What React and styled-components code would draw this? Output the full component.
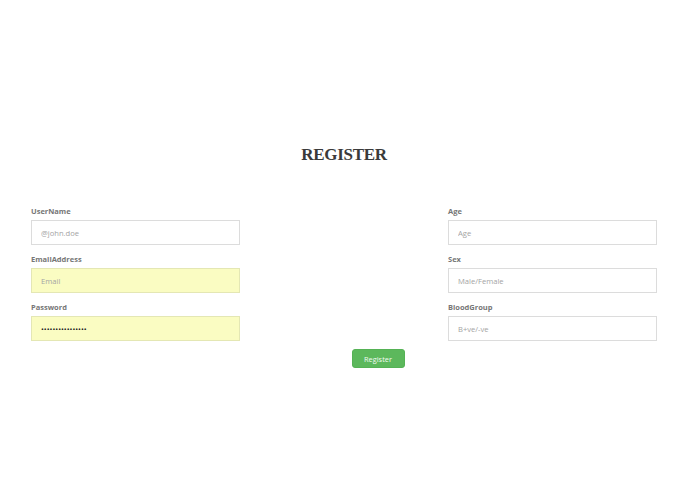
import React from "react";
import styled, { createGlobalStyle } from "styled-components";

const GlobalStyle = createGlobalStyle`
  html, body {
    margin: 0;
    padding: 0;
    background: #fff;
  }
  body {
    font-family: "Open Sans", "Liberation Sans", sans-serif;
  }
`;

const Page = styled.div`
  padding: 144px 38px 0 31px;
`;

const Title = styled.h1`
  margin: 0 0 41px;
  text-align: center;
  font-family: "Liberation Serif", "DejaVu Serif", serif;
  font-weight: 700;
  font-size: 17px;
  line-height: 21px;
  letter-spacing: -0.3px;
  color: #3a3a3a;
`;

const Columns = styled.div`
  display: grid;
  grid-template-columns: 209px 1fr 209px;
`;

const Column = styled.div`
  display: flex;
  flex-direction: column;
  gap: 9px;
`;

const Field = styled.div`
  display: flex;
  flex-direction: column;
  gap: 4px;
`;

const Label = styled.label`
  font-size: 7.5px;
  line-height: 10px;
  font-weight: 700;
  color: #767676;
`;

const Input = styled.input`
  box-sizing: border-box;
  width: 100%;
  height: 25px;
  padding: 0 9px;
  border: 1px solid ${(p) => (p.$filled ? "#e4e7b4" : "#dcdcdc")};
  background: ${(p) => (p.$filled ? "#fafcc2" : "#fff")};
  font-family: "Open Sans", "Liberation Sans", sans-serif;
  font-size: 7.6px;
  color: #222;
  outline: none;
  &::placeholder {
    color: #a4a4a4;
  }
`;

const Actions = styled.div`
  display: flex;
  justify-content: center;
  padding-left: 68px;
  margin-top: 8px;
`;

const Button = styled.button`
  box-sizing: border-box;
  width: 53px;
  height: 19px;
  padding: 0;
  border: 1px solid #55b255;
  border-radius: 3px;
  background: #5cb85c;
  color: #f2fbf2;
  font-family: "Open Sans", "Liberation Sans", sans-serif;
  font-size: 7.4px;
  cursor: pointer;
`;

const left = [
  { label: "UserName", placeholder: "@john.doe" },
  { label: "EmailAddress", placeholder: "Email", filled: true },
  { label: "Password", type: "password", value: "passwordpassword", filled: true },
];

const right = [
  { label: "Age", placeholder: "Age" },
  { label: "Sex", placeholder: "Male/Female" },
  { label: "BloodGroup", placeholder: "B+ve/-ve" },
];

function Fields({ items }) {
  return (
    <Column>
      {items.map((f) => (
        <Field key={f.label}>
          <Label>{f.label}</Label>
          <Input
            type={f.type || "text"}
            placeholder={f.placeholder}
            defaultValue={f.value}
            $filled={f.filled}
          />
        </Field>
      ))}
    </Column>
  );
}

export default function App() {
  return (
    <>
      <GlobalStyle />
      <Page>
        <Title>REGISTER</Title>
        <form onSubmit={(e) => e.preventDefault()}>
          <Columns>
            <Fields items={left} />
            <div />
            <Fields items={right} />
          </Columns>
          <Actions>
            <Button type="submit">Register</Button>
          </Actions>
        </form>
      </Page>
    </>
  );
}
